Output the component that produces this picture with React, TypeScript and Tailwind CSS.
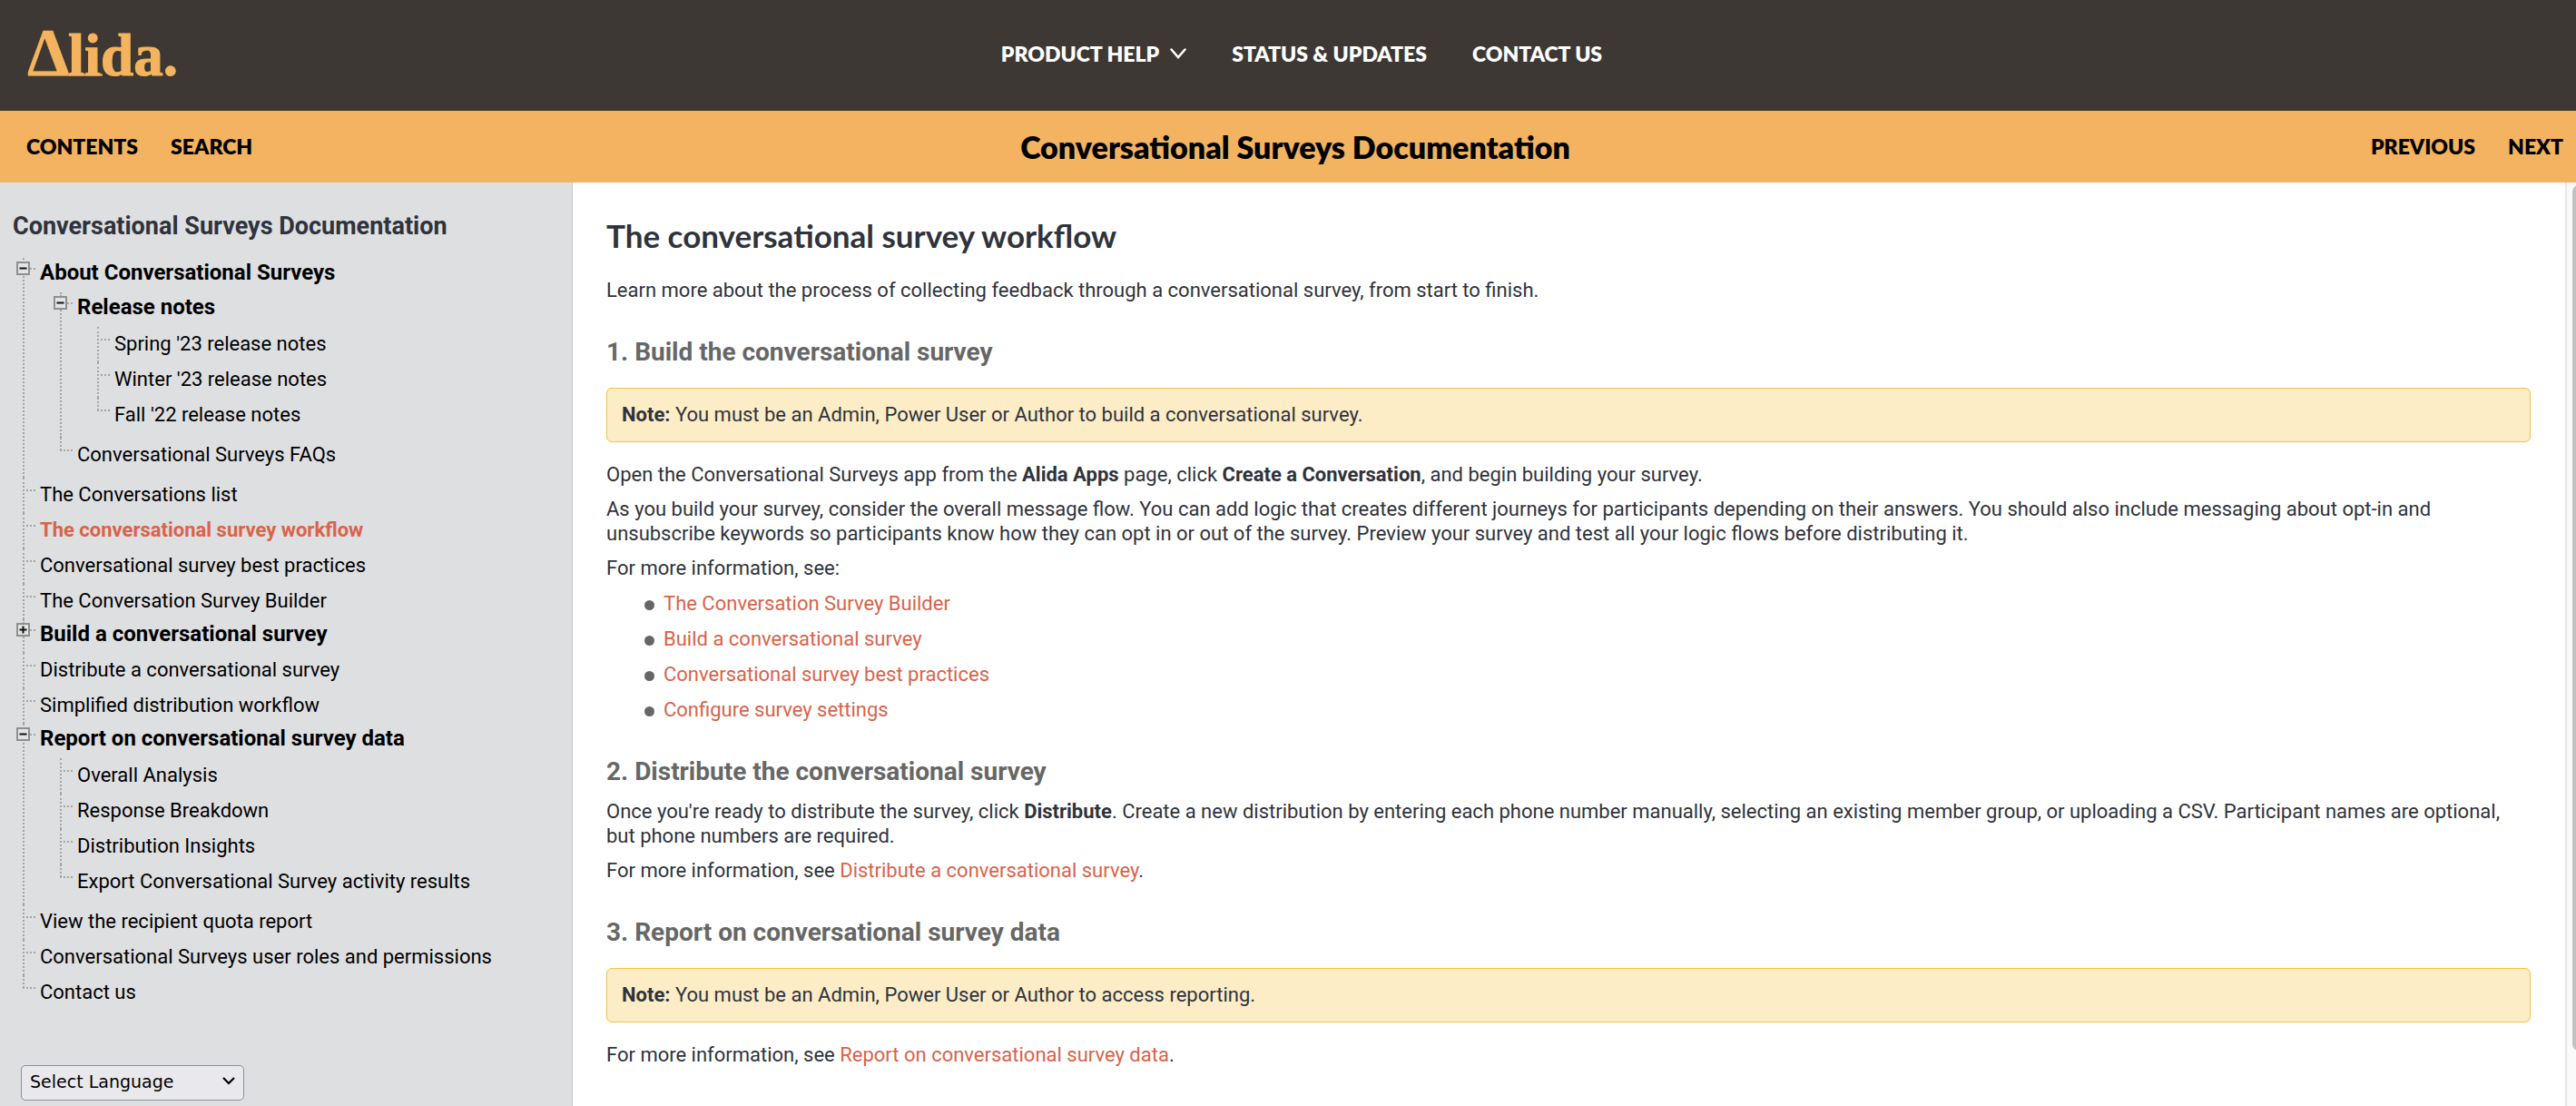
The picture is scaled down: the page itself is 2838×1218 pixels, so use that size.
import React from 'react';

type Node = { label: string; children?: Node[]; closed?: boolean; current?: boolean };

const tree: Node[] = [
  {
    label: 'About Conversational Surveys',
    children: [
      {
        label: 'Release notes',
        children: [
          { label: "Spring '23 release notes" },
          { label: "Winter '23 release notes" },
          { label: "Fall '22 release notes" },
        ],
      },
      { label: 'Conversational Surveys FAQs' },
    ],
  },
  { label: 'The Conversations list' },
  { label: 'The conversational survey workflow', current: true },
  { label: 'Conversational survey best practices' },
  { label: 'The Conversation Survey Builder' },
  { label: 'Build a conversational survey', closed: true, children: [] },
  { label: 'Distribute a conversational survey' },
  { label: 'Simplified distribution workflow' },
  {
    label: 'Report on conversational survey data',
    children: [
      { label: 'Overall Analysis' },
      { label: 'Response Breakdown' },
      { label: 'Distribution Insights' },
      { label: 'Export Conversational Survey activity results' },
    ],
  },
  { label: 'View the recipient quota report' },
  { label: 'Conversational Surveys user roles and permissions' },
  { label: 'Contact us' },
];

function TreeItem({ node, last }: { node: Node; last: boolean }) {
  const folder = node.children !== undefined;
  return (
    <li className="relative">
      <span
        aria-hidden="true"
        className={`absolute left-[13px] top-0 border-l-2 border-dotted border-[#a4a5a6] ${last ? 'h-[14px]' : 'h-full'}`}
      />
      <div className={`relative flex items-start ${folder ? 'h-[37px]' : 'h-[39px]'}`}>
        {folder ? (
          <>
            <button
              type="button"
              aria-label={`${node.closed ? 'Expand' : 'Collapse'} ${node.label}`}
              className="mt-[4px] ml-[6px] h-[15px] w-[15px] shrink-0 bg-[#dedfe1]"
            >
              <svg viewBox="0 0 15 15" className="block h-full w-full">
                <rect x="1" y="1" width="13" height="13" fill="#e3e4e5" stroke="#8f8f8f" strokeWidth="2" />
                <path d={node.closed ? 'M3.5 7.5h8M7.5 3.5v8' : 'M3.5 7.5h8'} stroke="#111" strokeWidth="2" />
              </svg>
            </button>
            <span aria-hidden="true" className="mt-[11px] mr-[5px] w-[6px] border-t-2 border-dotted border-[#a4a5a6]" />
          </>
        ) : (
          <span aria-hidden="true" className="mt-[13px] mr-[5px] ml-[13px] w-[14px] border-t-2 border-dotted border-[#a4a5a6]" />
        )}
        <a
          href="#"
          className={`whitespace-nowrap leading-[27px] ${folder ? 'pt-[3px] text-[24px] font-bold' : 'pt-[5px] text-[22px]'} ${node.current ? 'font-bold text-[#d9634a]' : 'text-black'}`}
        >
          {node.label}
        </a>
      </div>
      {folder && !node.closed && (
        <ul className="ml-[41px] pt-px pb-[5px]">
          {node.children!.map((c, i) => (
            <TreeItem key={c.label} node={c} last={i === node.children!.length - 1} />
          ))}
        </ul>
      )}
    </li>
  );
}

function Link({ children }: { children: React.ReactNode }) {
  return (
    <a href="#" className="text-[#d9634a]">
      {children}
    </a>
  );
}

function Note({ children }: { children: React.ReactNode }) {
  return (
    <div className="mb-[22px] rounded-[6px] border border-[#f4c244] bg-[#fcedc7] px-4 pt-[15px] pb-4">
      <strong>Note:</strong> {children}
    </div>
  );
}

const h2 = 'text-[28px] leading-[34px] font-bold text-[#666766]';

export default function App() {
  return (
    <div className="flex h-screen flex-col overflow-hidden bg-white font-['Roboto',sans-serif] text-[22px] leading-[27px] text-[#2f333c]">
      <header className="grid h-[122px] shrink-0 grid-cols-[1fr_auto_1fr] items-center bg-[#3d3834]">
        <a href="#" aria-label="Alida" className="justify-self-start pl-[20px]">
          <svg viewBox="0 0 190 100" className="block h-[100px] w-[190px]" fill="#f4b45f" stroke="#f4b45f">
            <text x="10" y="72" fontFamily="Liberation Serif" fontWeight="700" fontSize="74" strokeWidth="0.5">Δ</text>
            <text x="55" y="72" fontFamily="Liberation Serif" fontWeight="700" fontSize="65" strokeWidth="1.2">lida.</text>
            <path d="M11 71.500H93" strokeWidth="2" />
          </svg>
        </a>
        <nav className="flex items-center gap-[50px] pb-[4px] pl-[30px] font-['Lato',sans-serif] text-[23px] font-extrabold text-white">
          <button type="button" className="flex items-center gap-3">
            PRODUCT HELP
            <svg viewBox="0 0 18 12" className="h-[12px] w-[18px]" fill="none" stroke="currentColor" strokeWidth="2.5" strokeLinecap="round">
              <path d="M1.5 1.5 9 10l7.500-8.500" />
            </svg>
          </button>
          <a href="#">STATUS &amp; UPDATES</a>
          <a href="#">CONTACT US</a>
        </nav>
        <span />
      </header>

      <div className="grid h-[79px] shrink-0 grid-cols-[1fr_auto_1fr] items-center bg-[#f3b360] font-['Lato',sans-serif] text-[23px] font-extrabold text-black">
        <nav className="flex gap-[36px] pl-[29px]">
          <a href="#">CONTENTS</a>
          <a href="#">SEARCH</a>
        </nav>
        <h1 className="pl-[16px] text-[34px] leading-[40px]">Conversational Surveys Documentation</h1>
        <nav className="flex justify-end gap-[36px] pr-[14px]">
          <a href="#">PREVIOUS</a>
          <a href="#">NEXT</a>
        </nav>
      </div>

      <div className="flex min-h-0 flex-1">
        <aside className="w-[631px] shrink-0 border-r border-[#c6c7c8] bg-[#dedfe1]">
          <h2 className="pt-[31px] pl-[14px] text-[27px] leading-[34px] font-bold">Conversational Surveys Documentation</h2>
          <ul className="mt-[18px] ml-[12px]">
            {tree.map((n, i) => (
              <TreeItem key={n.label} node={n} last={i === tree.length - 1} />
            ))}
          </ul>
          <div className="relative mt-[60px] ml-[23px] w-[246px]">
            <select
              aria-label="Select Language"
              className="block h-[39px] w-full appearance-none rounded-[5px] border border-[#8f8f9d] bg-[#e9e9ed] pb-[3px] pl-[9px] font-['DejaVu_Sans',sans-serif] text-[19px] leading-[24px] text-black"
            >
              <option>Select Language</option>
            </select>
            <svg viewBox="0 0 14 9" className="pointer-events-none absolute top-[13px] right-[10px] h-[9px] w-[14px]" fill="none" stroke="#000" strokeWidth="2.200">
              <path d="M1 1l6 6 6-6" />
            </svg>
          </div>
        </aside>

        <main className="min-w-0 flex-1 pr-[38px] pl-[37px]">
          <h1 className="pt-[38px] font-['Lato',sans-serif] text-[35px] leading-[40px] font-bold">The conversational survey workflow</h1>
          <p className="mt-[27px]">Learn more about the process of collecting feedback through a conversational survey, from start to finish.</p>

          <h2 className={`${h2} mt-[38px] mb-[22px]`}>1. Build the conversational survey</h2>
          <Note>You must be an Admin, Power User or Author to build a conversational survey.</Note>
          <p>
            Open the Conversational Surveys app from the <strong>Alida Apps</strong> page, click{' '}
            <strong>Create a Conversation</strong>, and begin building your survey.
          </p>
          <p className="mt-[11px]">
            As you build your survey, consider the overall message flow. You can add logic that creates different journeys for
            participants depending on their answers. You should also include messaging about opt-in and unsubscribe keywords so
            participants know how they can opt in or out of the survey. Preview your survey and test all your logic flows before
            distributing it.
          </p>
          <p className="mt-[11px]">For more information, see:</p>
          <ul className="mt-[12px] flex flex-col gap-[12px] pl-[42px]">
            {[
              'The Conversation Survey Builder',
              'Build a conversational survey',
              'Conversational survey best practices',
              'Configure survey settings',
            ].map((t) => (
              <li key={t} className="flex items-center gap-[10px]">
                <span aria-hidden="true" className="mt-[4px] h-[11px] w-[11px] rounded-full bg-[#666]" />
                <Link>{t}</Link>
              </li>
            ))}
          </ul>

          <h2 className={`${h2} mt-[38px] mb-[13px]`}>2. Distribute the conversational survey</h2>
          <p>
            Once you're ready to distribute the survey, click <strong>Distribute</strong>. Create a new distribution by entering
            each phone number manually, selecting an existing member group, or uploading a CSV. Participant names are optional,
            but phone numbers are required.
          </p>
          <p className="mt-[11px]">
            For more information, see <Link>Distribute a conversational survey</Link>.
          </p>

          <h2 className={`${h2} mt-[38px] mb-[22px]`}>3. Report on conversational survey data</h2>
          <Note>You must be an Admin, Power User or Author to access reporting.</Note>
          <p>
            For more information, see <Link>Report on conversational survey data</Link>.
          </p>
        </main>

        <div aria-hidden="true" className="w-[12px] shrink-0 overflow-hidden border-l-2 border-[#e6e6e6] bg-[#fafafa] pt-[3px] pl-[6px]">
          <div className="h-[94%] w-[14px] rounded-full bg-[#c1c1c1]" />
        </div>
      </div>
    </div>
  );
}
